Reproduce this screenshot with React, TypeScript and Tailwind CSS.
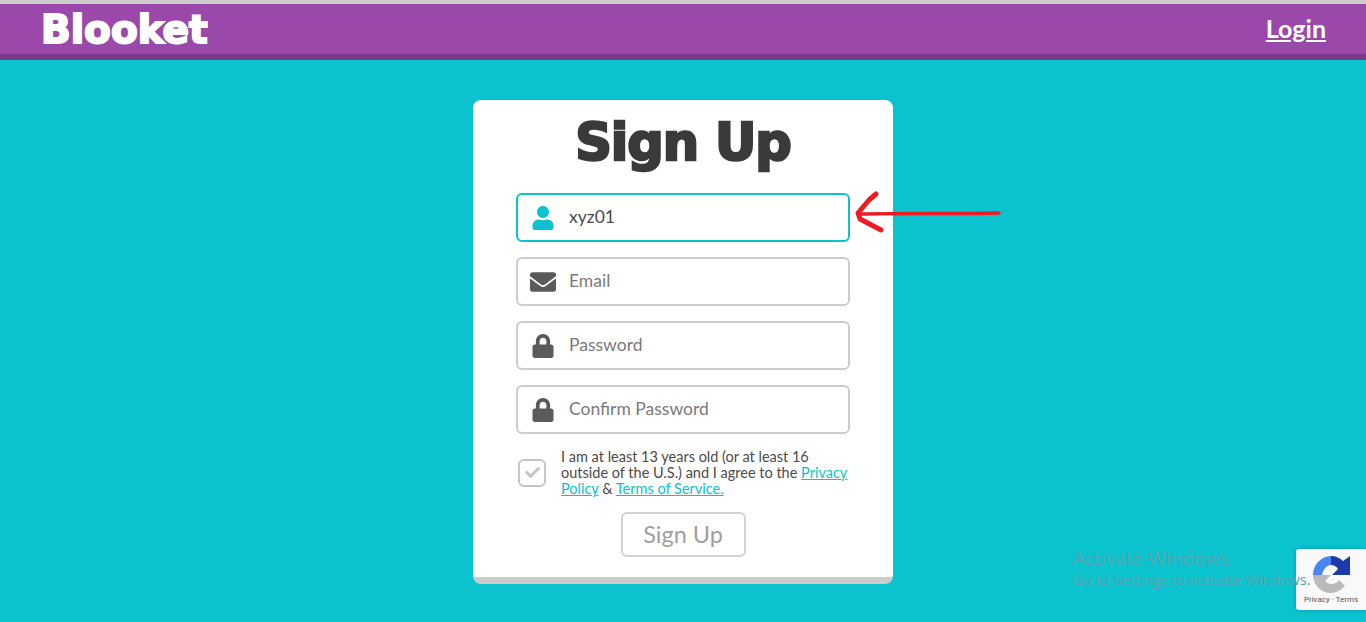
import type { ReactNode } from 'react'
import { FaCheck, FaEnvelope, FaLock, FaUser } from 'react-icons/fa'

const textFont = 'font-["Lato","Noto_Sans",sans-serif]'
const displayFont = 'font-["DejaVu_Sans",sans-serif] font-bold'

function Field({ icon, label, value, active }: { icon: ReactNode; label: string; value?: string; active?: boolean }) {
  return (
    <div
      className={`flex h-[49px] w-[334px] items-center rounded-md border-2 ${
        active ? 'border-[#0bc2cf] text-[#0bc2cf]' : 'border-[#cccccc] text-[#5a5a5a]'
      }`}
    >
      <div className="flex w-[51px] shrink-0 justify-center pr-[2px]">{icon}</div>
      <span className={`text-[17.5px] ${value ? 'text-[#4a4a4a]' : 'text-[#7a7a7a]'}`}>{value || label}</span>
    </div>
  )
}

function RecaptchaLogo() {
  return (
    <svg width="37" height="37" viewBox="0 0 37 37">
      <path d="M0 19C0 9 8 0 18 0V9C14 9 10 13 9 19z" fill="#4a86f3" />
      <path d="M18 0C23 0 27 2 30 5L37 0V19H19L25 13C23 10 21 9 18 9z" fill="#1c3aa9" />
      <path d="M0 19H18L12 25C14 27 16 28 18 28C21 28 24 27 26 24L32 30C28 34 23 37 18 37C8 37 0 29 0 19z" fill="#bababa" />
    </svg>
  )
}

export default function App() {
  return (
    <div className={`relative h-[622px] overflow-hidden bg-[#0bc2cf] ${textFont}`}>
      <header className="flex h-[60px] items-center justify-between border-t-4 border-b-[6px] border-t-[#cccccc] border-b-[#7b3a88] bg-[#9a49aa] pr-10 pl-[41px]">
        <div className={`text-[39px] leading-none text-white [-webkit-text-stroke:2px_white] ${displayFont}`}>Blooket</div>
        <a className="text-[25px] font-bold text-white underline">Login</a>
      </header>

      <main className="flex justify-center pt-10">
        <div className="flex h-[484px] w-[420px] flex-col items-center rounded-lg border-b-[7px] border-b-[#cccccc] bg-white">
          <h1 className={`mt-[11px] h-[82px] text-[51px] leading-[64px] tracking-[-1px] text-[#3a3a3a] [-webkit-text-stroke:2.5px_#3a3a3a] ${displayFont}`}>
            Sign Up
          </h1>
          <div className="flex flex-col gap-[15px]">
            <Field active icon={<FaUser size={24} />} label="Username" value="xyz01" />
            <Field icon={<FaEnvelope size={26} />} label="Email" />
            <Field icon={<FaLock size={24} />} label="Password" />
            <Field icon={<FaLock size={24} />} label="Confirm Password" />
          </div>
          <div className="mt-[14px] flex w-[334px] items-center">
            <div className="ml-[2px] flex h-[28px] w-[28px] shrink-0 items-center justify-center rounded-md border-2 border-[#c4c4c4]">
              <FaCheck size={15} className="text-[#c4c4c4]" />
            </div>
            <p className="ml-[15px] w-[289px] pt-[1px] text-[14.5px] leading-4 text-[#4a4a4a]">
              I am at least 13 years old (or at least 16 outside of the U.S.) and I agree to the{' '}
              <a className="text-[#0bc2cf] underline">Privacy Policy</a> &amp;{' '}
              <a className="text-[#0bc2cf] underline">Terms of Service.</a>
            </p>
          </div>
          <button className="mt-[15px] flex h-[45px] w-[125px] items-center justify-center rounded-md border-2 border-[#d2d2d2] text-[23.5px] text-[#a0a0a0]">
            Sign Up
          </button>
        </div>
      </main>

      {/* annotation arrow drawn on the screenshot */}
      <svg className="absolute top-[188px] left-[853px]" width="150" height="48" viewBox="0 0 150 48" fill="none">
        <path d="M146 25C110 26 50 25 6 26" stroke="#ed1c24" strokeWidth="3.5" strokeLinecap="round" />
        <path d="M23 6L16 12L5 25L7 31L28 42" stroke="#ed1c24" strokeWidth="5" strokeLinecap="round" strokeLinejoin="round" />
      </svg>

      <div className="absolute top-[549px] left-[1296px] flex h-[61px] w-[70px] flex-col items-center rounded-l-[3px] bg-[#f9f9f9] pt-[7px] shadow-[0_0_4px_rgba(0,0,0,0.2)]">
        <RecaptchaLogo />
        <div className="mt-[2px] font-['Roboto',sans-serif] text-[8px] leading-[10px] whitespace-nowrap text-[#555555]">Privacy · Terms</div>
      </div>

      {/* windows watermark sits on top of everything, including the badge */}
      <div className="absolute top-[546px] left-[1073px] font-['Open_Sans',sans-serif] text-[#5aa5ad]">
        <div className="text-[19px] leading-6">Activate Windows</div>
        <div className="text-[14.5px] leading-5 whitespace-nowrap">Go to Settings to activate Windows.</div>
      </div>
    </div>
  )
}
